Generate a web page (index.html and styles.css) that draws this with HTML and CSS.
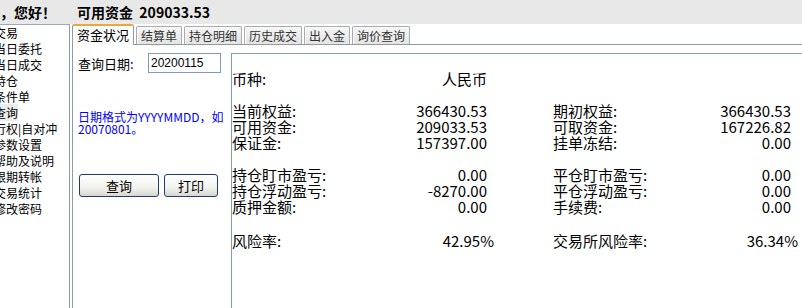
FILE: index.html
```html
<!DOCTYPE html>
<html lang="zh-CN">
<head>
<meta charset="utf-8">
<title>资金状况</title>
<link rel="stylesheet" href="styles.css">
</head>
<body>
<div class="topbar">
  <span class="greet">，您好！</span>
  <span class="avail">可用资金&nbsp;&nbsp;209033.53</span>
</div>
<div class="main">
  <ul class="sidebar">
    <li>交易</li>
    <li>当日委托</li>
    <li>当日成交</li>
    <li>持仓</li>
    <li>条件单</li>
    <li><span class="hl">查询</span></li>
    <li>行权|自对冲</li>
    <li>参数设置</li>
    <li>帮助及说明</li>
    <li>限期转帐</li>
    <li>交易统计</li>
    <li>修改密码</li>
  </ul>
  <div class="content">
    <div class="tabs">
      <div class="tab active">资金状况</div>
      <div class="tab">结算单</div>
      <div class="tab">持仓明细</div>
      <div class="tab">历史成交</div>
      <div class="tab">出入金</div>
      <div class="tab">询价查询</div>
    </div>
    <div class="page">
      <div class="query">
        <div class="qrow">
          <span class="qlabel">查询日期:</span>
          <input class="qinput" type="text" value="20200115">
        </div>
        <p class="hint">日期格式为YYYYMMDD，如<br>20070801。</p>
        <div class="btns">
          <button class="btn wide">查询</button>
          <button class="btn narrow">打印</button>
        </div>
      </div>
      <div class="data">
        <div class="grid">
          <div class="pair"><span>币种:</span><span>人民币</span></div>
          <div class="pair"></div>
        </div>
        <div class="grid group">
          <div class="pair"><span>当前权益:</span><span>366430.53</span></div>
          <div class="pair"><span>期初权益:</span><span>366430.53</span></div>
          <div class="pair"><span>可用资金:</span><span>209033.53</span></div>
          <div class="pair"><span>可取资金:</span><span>167226.82</span></div>
          <div class="pair"><span>保证金:</span><span>157397.00</span></div>
          <div class="pair"><span>挂单冻结:</span><span>0.00</span></div>
        </div>
        <div class="grid group">
          <div class="pair"><span>持仓盯市盈亏:</span><span>0.00</span></div>
          <div class="pair"><span>平仓盯市盈亏:</span><span>0.00</span></div>
          <div class="pair"><span>持仓浮动盈亏:</span><span>-8270.00</span></div>
          <div class="pair"><span>平仓浮动盈亏:</span><span>0.00</span></div>
          <div class="pair"><span>质押金额:</span><span>0.00</span></div>
          <div class="pair"><span>手续费:</span><span>0.00</span></div>
        </div>
        <div class="grid group last">
          <div class="pair"><span>风险率:</span><span class="pct">42.95%</span></div>
          <div class="pair"><span>交易所风险率:</span><span class="pct">36.34%</span></div>
        </div>
      </div>
    </div>
  </div>
</div>
</body>
</html>
```
FILE: styles.css
```css
* { box-sizing: border-box; }
html, body {
  margin: 0;
  padding: 0;
  width: 802px;
  height: 308px;
  overflow: hidden;
  background: #ffffff;
  font-family: "Noto Sans CJK SC", "Noto Sans", sans-serif;
  color: #000;
}
.topbar {
  height: 24px;
  background: #e8e8e8;
  display: flex;
  align-items: center;
  font-size: 14px;
  font-weight: bold;
  line-height: 24px;
}
.greet { width: 77px; }
.main {
  display: flex;
  height: 284px;
}
.sidebar {
  list-style: none;
  margin: 0;
  padding: 0;
  width: 70px;
  border-top: 1px solid #9aaabb;
  border-right: 1px solid #8b9aaa;
  overflow: hidden;
  font-size: 12px;
  line-height: 16px;
}
.sidebar li {
  margin-left: -6px;
  white-space: nowrap;
}
.sidebar .hl { background: #ececec; }
.content {
  flex: 1;
  margin-left: 2px;
  display: flex;
  flex-direction: column;
}
.tabs {
  height: 21px;
  display: flex;
  align-items: flex-end;
  gap: 2px;
  border-bottom: 1px solid #919b9c;
}
.tab {
  height: 18px;
  padding: 0 4px;
  border: 1px solid #a5acb0;
  border-bottom: none;
  border-radius: 2px 2px 0 0;
  background: linear-gradient(#f6f6f6, #e4e4e4);
  box-shadow: inset 1px 1px 0 #ffffff;
  font-size: 12px;
  line-height: 17px;
  color: #333;
  white-space: nowrap;
}
.tab.active {
  height: 21px;
  margin-bottom: -1px;
  border-color: #919b9c;
  border-top: 2px solid #f2a33a;
  background: #ffffff;
  box-shadow: none;
  color: #000;
  padding: 0 4px;
  font-size: 13px;
  line-height: 18px;
}
.page {
  flex: 1;
  display: flex;
}
.query {
  width: 159px;
  border-left: 1px solid #919b9c;
  padding: 8px 0 0 5px;
}
.qrow {
  display: flex;
  align-items: center;
  height: 20px;
}
.qlabel {
  width: 70px;
  font-size: 13px;
}
.qinput {
  width: 73px;
  height: 20px;
  border: 1px solid #7f9db9;
  padding: 0 2px;
  font-family: "Liberation Sans", sans-serif;
  font-size: 12px;
  color: #000;
  outline: none;
}
.hint {
  margin: 38px 0 0 0;
  color: #0000ff;
  font-size: 12px;
  line-height: 12px;
}
.btns {
  margin-top: 39px;
  display: flex;
  gap: 5px;
  padding-left: 1px;
}
.btn {
  height: 23px;
  border: 1px solid #1c3f6e;
  border-radius: 3px;
  background: linear-gradient(#ffffff, #f2f2ee 60%, #d8d6ce);
  font-family: "Noto Sans CJK SC", sans-serif;
  font-size: 13px;
  line-height: 20px;
  padding: 0;
  color: #000;
}
.btn.wide { width: 80px; }
.btn.narrow { width: 54px; }
.data {
  flex: 1;
  margin-top: 8px;
  border-top: 1px solid #7f9db9;
  border-left: 1px solid #7f9db9;
  padding: 17px 0 0 0;
  font-size: 15px;
  line-height: 16px;
}
.grid {
  display: grid;
  grid-template-columns: 255px 238px;
  column-gap: 66px;
}
.group { margin-top: 16px; }
.group.last { margin-top: 18px; }
.pair {
  display: flex;
  justify-content: space-between;
  white-space: nowrap;
  height: 16px;
}
.pct { margin-right: -7px; }
```
